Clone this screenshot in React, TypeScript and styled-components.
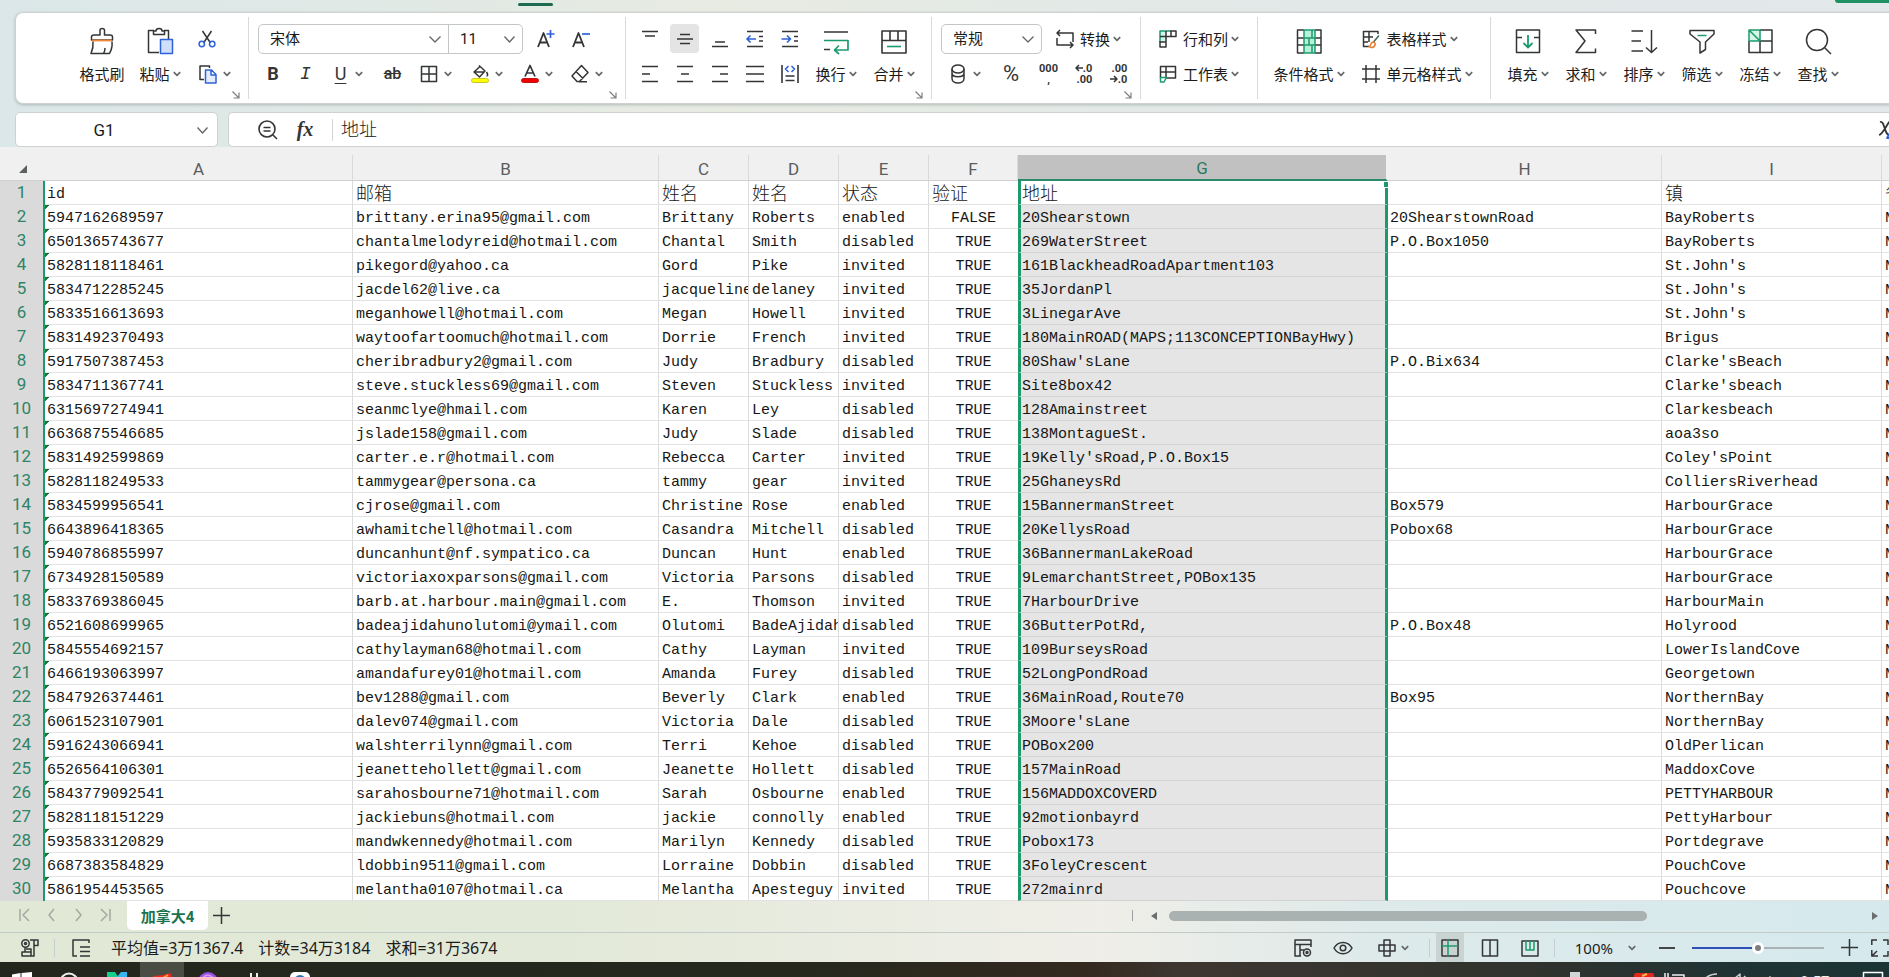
import React from "react";
import styled, { createGlobalStyle, css } from "styled-components";

const INK = "#333536";
const GREEN = "#1c9a6c";
const BLUE = "#2f62d9";

const GlobalStyle = createGlobalStyle`
  * { box-sizing: border-box; }
  body {
    margin: 0;
    overflow: hidden;
    font-family: Roboto, "Noto Sans CJK SC", sans-serif;
    font-size: 15px;
    color: #1b1b1b;
  }
  button, select, input {
    font: inherit;
    color: inherit;
    margin: 0;
    padding: 0;
    border: 0;
    background: none;
    outline: 0;
  }
`;

/* ---------- icons ---------- */

type IconProps = { w?: number; h?: number; vb?: string; sw?: number; children: React.ReactNode };

const Svg = styled.svg`
  display: block;
  flex: none;
  overflow: visible;
`;

const Icon = ({ w = 18, h, vb, sw = 1.5, children }: IconProps) => (
  <Svg
    width={w}
    height={h ?? w}
    viewBox={vb ?? `0 0 ${w} ${h ?? w}`}
    fill="none"
    stroke={INK}
    strokeWidth={sw}
    strokeLinejoin="round"
    aria-hidden="true"
  >
    {children}
  </Svg>
);

const Chevron = ({ w = 8 }: { w?: number }) => (
  <Icon w={w} h={8} vb={`0 0 ${w} 8`} sw={w > 8 ? 1.4 : 1.7}>
    <path stroke="#66696a" d={w > 8 ? `M0.5 1.5 L${w / 2} 7 L${w - 0.5} 1.5` : "M0.8 2.2 L4 5.4 L7.2 2.2"} />
  </Icon>
);

const Brush = () => (
  <Icon w={28}>
    <path d="M12 8V3.2C12 .8 16.500.8 16.500 3.200V8H22C23.500 8 24.500 9 24.500 10V13H3.500V10C3.500 9 4.500 8 6 8Z" />
    <path stroke="#f0883c" strokeWidth="1.800" d="M4 13.500H24" />
    <path d="M5 14.500C5.500 19 4.500 23 3 26.500H21.500C23.500 23 24.500 19 24 14.500M15.500 26.500C16.500 25 17 23 17 21" />
  </Icon>
);
const Paste = () => (
  <Icon w={28}>
    <path d="M8 3.500H2.500V25.500H13M18 3.500H22.500V12" />
    <path d="M7.500 7.500V4H10C10 .8 16 .8 16 4H18.500V7.500Z" />
    <rect x="14.500" y="12.500" width="12" height="14" fill="#cfe0fb" stroke={BLUE} />
  </Icon>
);
const Scissors = () => (
  <Icon>
    <path d="M4.500 1L12.500 13M13.500 1L5.500 13" />
    <circle cx="3.800" cy="14" r="2.700" stroke={BLUE} />
    <circle cx="14.200" cy="14" r="2.700" stroke={BLUE} />
  </Icon>
);
const Copy = () => (
  <Icon>
    <path d="M5 14.500H1V1H10.500V3" />
    <path stroke={BLUE} fill="#e3edfd" d="M6.500 5H12.500L17 9.500V18H6.500ZM12 5V10H17" />
  </Icon>
);
const FontGrow = () => (
  <Icon>
    <path d="M1 17L6.500 3L12 17M3 12.500H10" strokeWidth="1.800" />
    <path stroke={BLUE} strokeWidth="1.700" d="M13.500 0V8M9.500 4H17.500" />
  </Icon>
);
const FontShrink = () => (
  <Icon>
    <path d="M1 17L6.500 3L12 17M3 12.500H10" strokeWidth="1.800" />
    <path stroke={BLUE} strokeWidth="1.700" d="M10 4H18" />
  </Icon>
);
const Borders = () => (
  <Icon>
    <path d="M1.500 1.500H16.500V16.500H1.500ZM9 1.500V16.500M1.500 9H16.500" />
  </Icon>
);
const Fill = () => (
  <Icon>
    <path d="M8 0.500L14 6L8.500 12L3 7L9 1.500M3.500 7H13M15.500 7C17 9.500 17 11 15.500 11" />
    <rect x="0.500" y="13.500" width="17" height="4" rx="2" fill="#ffff00" stroke="#c8c820" strokeWidth="1" />
  </Icon>
);
const FontColor = () => (
  <Icon>
    <path d="M4 11.500L9 0.500L14 11.500M6 8H12" strokeWidth="1.700" />
    <rect x="0.500" y="13.500" width="17" height="4" rx="2" fill="#f00000" stroke="#c01010" strokeWidth="1" />
  </Icon>
);
const Eraser = () => (
  <Icon>
    <path d="M10.500 0.500L17 7.500L8.500 16.500H6L1 11ZM5 6.500L12 13.500M8 16.800H16" />
  </Icon>
);
const Lines = ({ d }: { d: string }) => (
  <Icon sw={1.7}>
    <path d={d} />
  </Icon>
);
const Indent = ({ right = false }: { right?: boolean }) => (
  <Icon sw={1.7}>
    <path d="M1 1.500H17M13 6.500H17M13 11H17M1 16.500H17" />
    <path stroke={BLUE} d={right ? "M0.500 9H9M6 5.500L9.500 9L6 12.500" : "M10 9H1.500M4.500 5.500L1 9L4.500 12.500"} />
  </Icon>
);
const Distribute = () => (
  <Icon sw={1.6}>
    <path d="M1 0V18M17 0V18M4.500 11H13.500M4.500 15.500H13.500" />
    <path stroke={BLUE} d="M7.500 1L4.500 4L7.500 7M10.500 1L13.500 4L10.500 7" />
  </Icon>
);
const Wrap = () => (
  <Icon w={28} sw={1.7}>
    <path d="M2 5H26M2 22.500H8" />
    <path stroke={GREEN} d="M2 13.500H26V23H13M17 18.500L12.500 23L17 27" />
  </Icon>
);
const Merge = () => (
  <Icon w={28} sw={1.6}>
    <path d="M2 4H26V26H2ZM2 13.500H26M10 4V13.500M18 4V13.500" />
    <path stroke={GREEN} d="M7 19.500H21" />
  </Icon>
);
const Convert = () => (
  <Icon>
    <path d="M4 0L1 3L4 6M1 3H17V12M14 18L17 15L14 12M17 15H1V8" />
  </Icon>
);
const Coins = () => (
  <Icon w={14} h={20}>
    <ellipse cx="7" cy="5" rx="6" ry="4" />
    <path d="M1 5V9C1 14 13 14 13 9V5M1 9.500V14.500C1 20.500 13 20.500 13 14.500V9.500" />
  </Icon>
);
const RowCol = () => (
  <Icon>
    <path fill="#d3f6e6" stroke="none" d="M1 1H7V12H1Z" />
    <path stroke={GREEN} d="M1 12V1H11" />
    <path d="M11 1H17V6.500H7V17H1V11M1 6.500H7M1 12H7M7 1V6.500M12 1V6.500" />
  </Icon>
);
const SheetIcon = () => (
  <Icon>
    <path d="M1.500 13V1.500H16.500V13H7M1.500 7H16.500M7 1.500V13" />
    <path stroke={GREEN} d="M1.500 12.500H7.500L5 17H1.500Z" />
  </Icon>
);
const CondFormat = () => (
  <Icon w={28}>
    <path fill="#b9f0d9" stroke="none" d="M9 3H20V26H9Z" />
    <path d="M9 3H2.500V26H9M20 3H26V26H20M2.500 11H9M2.500 18H9M20 11H26M20 18H26" />
    <path stroke={GREEN} d="M9 3H20V26H9ZM9 11H20M9 18H20M14 11V18M17 3V11M17 18V26" />
  </Icon>
);
const TableStyle = () => (
  <Icon>
    <path d="M7 16.500H1.500V1.500H16V4M1.500 7H11M7 1.500V12M1.500 12H6" />
    <path stroke="#3c6b58" d="M17 5.500L11.500 12" />
    <path stroke="#ea7a2c" d="M11.500 12C7.500 12 10 16 7 16.500C10 19 14 16.500 13 13Z" />
  </Icon>
);
const CellStyle = () => (
  <Icon>
    <path d="M4 0V18M14 0V18M0 4H18M0 14H18" />
  </Icon>
);
const FillDown = () => (
  <Icon w={28}>
    <path d="M8 10.500H2.500V3H25.500V10.500H20M2.500 10.500V25.500H25.500V10.500" />
    <path stroke={GREEN} strokeWidth="1.800" d="M14 8V20.500M9.500 16L14 20.500L18.500 16" />
  </Icon>
);
const Sigma = () => (
  <Icon w={28}>
    <path d="M23.500 7V3H4L13 14L4 25.500H23.500V21.500" />
  </Icon>
);
const Sort = () => (
  <Icon w={28}>
    <path d="M1.500 4H13M1.500 14H11M1.500 24H13M21.500 3V25.500M16 20.500L21.500 25.500L27 20.500" />
  </Icon>
);
const Filter = () => (
  <Icon w={28}>
    <path d="M2 3.500H26V7L17.500 15V22.500L12 26V15L2 7Z" />
    <path stroke={GREEN} d="M9.500 8.500H18.500" />
  </Icon>
);
const Freeze = () => (
  <Icon w={28}>
    <path fill="#d3f6e6" stroke="none" d="M3 3H14V14H3Z" />
    <path d="M14 3H26V25.500H3V14M14 14V25.500M14 14H26" />
    <path stroke={GREEN} d="M3 14V3H14V14ZM3 3L14 14" />
  </Icon>
);
const Find = () => (
  <Icon w={28}>
    <circle cx="13" cy="13" r="10.500" />
    <path d="M20.500 20.500L27 27" />
  </Icon>
);
const ZoomOut = () => (
  <Icon w={20} sw={1.6}>
    <circle cx="9" cy="9" r="8" />
    <path d="M15 15L19 19M5.500 7.500H12.500M5.500 11H12.500" />
  </Icon>
);
const EquationIcon = () => (
  <Icon w={20} sw={1.8}>
    <path d="M2 2C7 0 6 16 12 15M12 1C9 4 5 14 1 15" />
    <path stroke={BLUE} d="M9 18L13 11L17 18Z" />
  </Icon>
);
const SmallArrow = ({ right = false }: { right?: boolean }) => (
  <Icon w={8} sw={1.5}>
    <path d={right ? "M0 4H7M4 1L7 4L4 7" : "M8 4H1M4 1L1 4L4 7"} />
  </Icon>
);
const Launcher = () => (
  <Icon w={8} sw={1.2}>
    <path stroke="#7c7f80" d="M0.500 0.500L7 7M7 1.500V7H1.500" />
  </Icon>
);

/* ---------- shell ---------- */

const Window = styled.div`
  height: 100vh;
  width: calc(100% + 12px);
  display: flex;
  flex-direction: column;
  overflow: hidden;
  background: linear-gradient(90deg, #dbe7e8 0%, #e1e9e5 22%, #e8ebe2 38%, #e2e9e7 60%, #e3e8ea 100%);
`;

const TabStrip = styled.div`
  flex: none;
  height: 12px;
  display: flex;
  justify-content: space-between;
  padding-left: 518px;
`;
const TabMarker = styled.span`
  width: 35px;
  height: 3px;
  margin-top: 3px;
  border-radius: 2px;
  background: #1f6b52;
`;
const ShareEdge = styled.span`
  width: 66px;
  height: 3px;
  border-bottom-left-radius: 4px;
  background: #1e9163;
`;

const Ribbon = styled.header`
  flex: none;
  display: flex;
  margin-left: 15px;
  height: 92px;
  border: 1px solid #cdd2d0;
  border-right: 0;
  border-radius: 8px 0 0 8px;
  background: #fff;
  box-shadow: 0 1px 3px rgba(80, 100, 100, 0.35);
`;
const Divider = styled.i`
  flex: none;
  width: 1px;
  margin: 4px 0;
  background: #d9d9d9;
`;
const Group = styled.section<{ $w?: number; $pad?: number }>`
  flex: none;
  width: ${(p) => (p.$w ? `${p.$w}px` : "auto")};
  padding: 8px 8px 0 ${(p) => p.$pad ?? 8}px;
  display: flex;
  flex-direction: column;
`;
const GroupBody = styled.div`
  display: flex;
  height: 70px;
`;
const GroupFoot = styled.div`
  display: flex;
  justify-content: flex-end;
`;
const Stack = styled.div<{ $gap?: number }>`
  display: flex;
  flex-direction: column;
  margin-left: ${(p) => p.$gap ?? 0}px;
`;
const Line = styled.div`
  display: flex;
  align-items: center;
  height: 35px;
`;
const Tool = styled.button<{ $w?: number; $active?: boolean; $gap?: number }>`
  flex: none;
  display: flex;
  align-items: center;
  justify-content: center;
  gap: ${(p) => p.$gap ?? 6}px;
  width: ${(p) => p.$w ?? 35}px;
  height: 29px;
  white-space: nowrap;
  ${(p) =>
    p.$active &&
    css`
      width: 29px;
      margin: 0 3px;
      border-radius: 4px;
      background: #e4e4e4;
    `}
`;
const Big = styled.button<{ $w?: number }>`
  flex: none;
  display: grid;
  grid-template-rows: 35px 35px;
  place-items: center;
  width: ${(p) => p.$w ?? 58}px;
  white-space: nowrap;
`;
const BigIcon = styled.span`
  padding-top: 4px;
`;
const Caption = styled.span`
  display: flex;
  align-items: center;
  gap: 3px;
`;
const Letter = styled.span<{ $kind: "b" | "i" | "u" | "s" | "pct" }>`
  font-size: 18px;
  line-height: 20px;
  color: ${INK};
  ${(p) => p.$kind === "b" && "font-weight: 700;"}
  ${(p) => p.$kind === "i" && 'font-style: italic; font-family: "Liberation Mono", monospace;'}
  ${(p) => p.$kind === "u" && "text-decoration: underline; text-underline-offset: 3px;"}
  ${(p) => p.$kind === "s" && "font-size: 16px; font-weight: 500; text-decoration: line-through;"}
  ${(p) => p.$kind === "pct" && "font-size: 22px;"}
`;
const Digits = styled.span<{ $center?: boolean }>`
  display: grid;
  justify-items: ${(p) => (p.$center ? "center" : "end")};
  font-size: 11px;
  font-weight: 700;
  line-height: 11px;
  color: ${INK};
  span {
    display: flex;
    align-items: center;
  }
`;

const Combo = styled.div`
  display: flex;
  height: 30px;
  border: 1px solid #c3c6c6;
  border-radius: 5px;
`;
const Field = styled.label<{ $w: number; $split?: boolean }>`
  position: relative;
  display: flex;
  width: ${(p) => p.$w}px;
  border-right: ${(p) => (p.$split ? "1px solid #c3c6c6" : "0")};
  svg {
    position: absolute;
    right: 7px;
    top: 10px;
    pointer-events: none;
  }
`;
const Select = styled.select`
  appearance: none;
  flex: 1;
  min-width: 0;
  padding-left: 11px;
`;
const After = styled.div`
  display: flex;
  margin-left: 5px;
`;

const BigTool = ({ icon, label, w, arrow = true }: { icon: React.ReactNode; label: string; w?: number; arrow?: boolean }) => (
  <Big $w={w}>
    <BigIcon>{icon}</BigIcon>
    <Caption>
      {label}
      {arrow && <Chevron />}
    </Caption>
  </Big>
);

/* ---------- formula bar ---------- */

const FormulaRow = styled.div`
  flex: none;
  display: flex;
  gap: 10px;
  margin: 8px 0 0 15px;
`;
const NameBox = styled.label`
  position: relative;
  display: flex;
  width: 203px;
  height: 35px;
  border: 1px solid #cdd2d0;
  border-radius: 5px;
  background: #fff;
  svg {
    position: absolute;
    right: 9px;
    top: 13px;
  }
  input {
    width: 176px;
    text-align: center;
    font-size: 17px;
  }
`;
const FormulaBox = styled.div`
  flex: 1;
  display: flex;
  align-items: center;
  height: 35px;
  padding-left: 29px;
  border: 1px solid #cdd2d0;
  border-right: 0;
  border-radius: 5px 0 0 5px;
  background: #fff;
`;
const Fx = styled.button`
  width: 54px;
  font: italic 700 20px "Liberation Serif", serif;
  color: ${INK};
`;
const FormulaSplit = styled.i`
  width: 1px;
  height: 22px;
  margin-right: 8px;
  background: #d5d5d5;
`;
const FormulaInput = styled.input`
  flex: 1;
  padding-bottom: 3px;
  font-family: "Liberation Serif", "Noto Sans CJK SC", serif;
  font-size: 18px;
  font-weight: 300;
`;
const Equation = styled.button`
  width: 23px;
`;

/* ---------- grid ---------- */

const Sheet = styled.main`
  flex: none;
  padding-top: 8px;
  overflow: hidden;
  background: #f0f0f0;
`;
const Grid = styled.table`
  width: 1972px;
  table-layout: fixed;
  border-spacing: 0;
  background: #fff;
`;
const ColHead = styled.th<{ $on?: boolean }>`
  height: 26px;
  padding: 2px 0 0;
  border-right: 1px solid #dadada;
  border-bottom: 1px solid #cfcfcf;
  background: #f0f0f0;
  color: #5a5d5e;
  font-size: 17px;
  font-weight: 400;
  line-height: 22px;
  ${(p) =>
    p.$on &&
    css`
      border-right: 2px solid #f0f0f0;
      border-bottom: 2px solid #2b8a67;
      background: #c1c1c1;
      color: #2b7a5c;
    `}
`;
const Corner = styled(ColHead)`
  border-right: 0;
  svg { margin-left: 19px; }
`;
const RowHead = styled.th`
  height: 24px;
  padding: 0 0 2px;
  border-right: 2px solid ${GREEN};
  background: #dadada;
  color: #2f8466;
  font-size: 17px;
  font-weight: 400;
  line-height: 22px;
`;
const Cell = styled.td<{ $col: number; $head: boolean }>`
  position: relative;
  height: 24px;
  padding: 5px 3px 0;
  overflow: hidden;
  white-space: nowrap;
  border-right: 1px solid #dcdcdc;
  border-bottom: 1px solid #e2e2e2;
  font-family: "Liberation Mono", "Noto Sans CJK SC", monospace;
  font-size: ${(p) => (p.$head && p.$col > 0 ? 18 : 15)}px;
  font-weight: ${(p) => (p.$head ? 300 : 400)};
  line-height: 18px;
  color: #161616;
  ${(p) => p.$col === 0 && "padding-left: 2px;"}
  ${(p) => p.$col === 0 && !p.$head && "background: linear-gradient(135deg, #1b7a2f 3px, transparent 3px);"}
  ${(p) => p.$col === 5 && "border-right: 0;"}
  ${(p) => p.$col === 5 && !p.$head && "text-align: center;"}
  ${(p) =>
    p.$col === 6 &&
    css`
      padding: 5px 1px 0;
      border-left: 3px solid ${GREEN};
      border-right: 3px solid ${GREEN};
      border-bottom-color: #d2d2d2;
      background: ${p.$head ? "#fff" : "#e5e5e5"};
      overflow: ${p.$head ? "visible" : "hidden"};
    `}
  ${(p) => p.$col === 7 && "padding-left: 2px;"}
`;
const Handle = styled.i`
  position: absolute;
  top: 0;
  right: -4px;
  width: 6px;
  height: 7px;
  border: 1px solid #fff;
  background: ${GREEN};
`;

const WIDTHS = [45, 308, 306, 90, 90, 90, 89, 370, 274, 220, 90];
const LETTERS = ["A", "B", "C", "D", "E", "F", "G", "H", "I", "J"];

const ROWS: string[][] = [
  ["id", "邮箱", "姓名", "姓名", "状态", "验证", "地址", "", "镇"],
  ["5947162689597", "brittany.erina95@gmail.com", "Brittany", "Roberts", "enabled", "FALSE", "20Shearstown", "20ShearstownRoad", "BayRoberts"],
  ["6501365743677", "chantalmelodyreid@hotmail.com", "Chantal", "Smith", "disabled", "TRUE", "269WaterStreet", "P.O.Box1050", "BayRoberts"],
  ["5828118118461", "pikegord@yahoo.ca", "Gord", "Pike", "invited", "TRUE", "161BlackheadRoadApartment103", "", "St.John's"],
  ["5834712285245", "jacdel62@live.ca", "jacqueline", "delaney", "invited", "TRUE", "35JordanPl", "", "St.John's"],
  ["5833516613693", "meganhowell@hotmail.com", "Megan", "Howell", "invited", "TRUE", "3LinegarAve", "", "St.John's"],
  ["5831492370493", "waytoofartoomuch@hotmail.com", "Dorrie", "French", "invited", "TRUE", "180MainROAD(MAPS;113CONCEPTIONBayHwy)", "", "Brigus"],
  ["5917507387453", "cheribradbury2@gmail.com", "Judy", "Bradbury", "disabled", "TRUE", "80Shaw'sLane", "P.O.Bix634", "Clarke'sBeach"],
  ["5834711367741", "steve.stuckless69@gmail.com", "Steven", "Stuckless", "invited", "TRUE", "Site8box42", "", "Clarke'sbeach"],
  ["6315697274941", "seanmclye@hmail.com", "Karen", "Ley", "disabled", "TRUE", "128Amainstreet", "", "Clarkesbeach"],
  ["6636875546685", "jslade158@gmail.com", "Judy", "Slade", "disabled", "TRUE", "138MontagueSt.", "", "aoa3so"],
  ["5831492599869", "carter.e.r@hotmail.com", "Rebecca", "Carter", "invited", "TRUE", "19Kelly'sRoad,P.O.Box15", "", "Coley'sPoint"],
  ["5828118249533", "tammygear@persona.ca", "tammy", "gear", "invited", "TRUE", "25GhaneysRd", "", "ColliersRiverhead"],
  ["5834599956541", "cjrose@gmail.com", "Christine", "Rose", "enabled", "TRUE", "15BannermanStreet", "Box579", "HarbourGrace"],
  ["6643896418365", "awhamitchell@hotmail.com", "Casandra", "Mitchell", "disabled", "TRUE", "20KellysRoad", "Pobox68", "HarbourGrace"],
  ["5940786855997", "duncanhunt@nf.sympatico.ca", "Duncan", "Hunt", "enabled", "TRUE", "36BannermanLakeRoad", "", "HarbourGrace"],
  ["6734928150589", "victoriaxoxparsons@gmail.com", "Victoria", "Parsons", "disabled", "TRUE", "9LemarchantStreet,POBox135", "", "HarbourGrace"],
  ["5833769386045", "barb.at.harbour.main@gmail.com", "E.", "Thomson", "invited", "TRUE", "7HarbourDrive", "", "HarbourMain"],
  ["6521608699965", "badeajidahunolutomi@ymail.com", "Olutomi", "BadeAjidah", "disabled", "TRUE", "36ButterPotRd,", "P.O.Box48", "Holyrood"],
  ["5845554692157", "cathylayman68@hotmail.com", "Cathy", "Layman", "invited", "TRUE", "109BurseysRoad", "", "LowerIslandCove"],
  ["6466193063997", "amandafurey01@hotmail.com", "Amanda", "Furey", "disabled", "TRUE", "52LongPondRoad", "", "Georgetown"],
  ["5847926374461", "bev1288@gmail.com", "Beverly", "Clark", "enabled", "TRUE", "36MainRoad,Route70", "Box95", "NorthernBay"],
  ["6061523107901", "dalev074@gmail.com", "Victoria", "Dale", "disabled", "TRUE", "3Moore'sLane", "", "NorthernBay"],
  ["5916243066941", "walshterrilynn@gmail.com", "Terri", "Kehoe", "disabled", "TRUE", "POBox200", "", "OldPerlican"],
  ["6526564106301", "jeanettehollett@gmail.com", "Jeanette", "Hollett", "disabled", "TRUE", "157MainRoad", "", "MaddoxCove"],
  ["5843779092541", "sarahosbourne71@hotmail.com", "Sarah", "Osbourne", "enabled", "TRUE", "156MADDOXCOVERD", "", "PETTYHARBOUR"],
  ["5828118151229", "jackiebuns@hotmail.com", "jackie", "connolly", "enabled", "TRUE", "92motionbayrd", "", "PettyHarbour"],
  ["5935833120829", "mandwkennedy@hotmail.com", "Marilyn", "Kennedy", "disabled", "TRUE", "Pobox173", "", "Portdegrave"],
  ["6687383584829", "ldobbin9511@gmail.com", "Lorraine", "Dobbin", "disabled", "TRUE", "3FoleyCrescent", "", "PouchCove"],
  ["5861954453565", "melantha0107@hotmail.ca", "Melantha", "Apesteguy", "invited", "TRUE", "272mainrd", "", "Pouchcove"],
];

/* ---------- bottom bars ---------- */

const bottomTint = css`
  background: linear-gradient(90deg, #e1e8d6 0%, #e3e9d8 30%, #efeee8 58%, #deeaea 72%, #d5e9ed 100%);
`;
const SheetTabs = styled.nav`
  flex: none;
  display: flex;
  height: 31px;
  padding-left: 11px;
  ${bottomTint}
`;
const NavBtn = styled.button`
  display: grid;
  place-items: center;
  width: 27px;
  height: 28px;
`;
const SheetTab = styled.button`
  width: 81px;
  height: 29px;
  margin-left: 8px;
  border-radius: 0 0 5px 5px;
  background: #fff;
  color: #1a7350;
  font-size: 15px;
  font-weight: 700;
`;
const ScrollArea = styled.div`
  flex: 1;
  display: flex;
  align-items: center;
  justify-content: flex-end;
  height: 29px;
  padding-right: 23px;
`;
const Grip = styled.i`
  width: 1px;
  height: 11px;
  margin-right: 18px;
  background: #9aa0a0;
`;
const Track = styled.div`
  width: 715px;
  padding-left: 12px;
`;
const Thumb = styled.div`
  width: 478px;
  height: 10px;
  border-radius: 5px;
  background: #a9b1b1;
`;
const StatusBar = styled.footer`
  flex: none;
  display: flex;
  align-items: center;
  justify-content: space-between;
  height: 30px;
  border-top: 1px solid #c3cbc6;
  ${bottomTint}
`;
const Cluster = styled.div<{ $left?: number }>`
  display: flex;
  align-items: center;
  padding-left: ${(p) => p.$left ?? 0}px;
`;
const Stats = styled.span`
  display: flex;
  gap: 15px;
  padding-left: 4px;
  font-family: "Noto Sans", "Noto Sans CJK SC", sans-serif;
  font-size: 16px;
  line-height: 28px;
`;
const StatusBtn = styled.button<{ $w?: number; $on?: boolean }>`
  display: flex;
  align-items: center;
  justify-content: center;
  gap: 5px;
  width: ${(p) => p.$w ?? 40}px;
  height: 29px;
  ${(p) => p.$on && "width: 28px; margin: 0 6px; background: #c9d4d2;"}
`;
const StatusSplit = styled.i`
  width: 1px;
  height: 18px;
  margin-left: 4px;
  background: #c6cfcd;
`;
const ZoomBtn = styled.button`
  display: flex;
  align-items: center;
  gap: 15px;
  padding: 0 23px 0 20px;
  font-family: "Noto Sans", sans-serif;
`;
const Zoom = styled.input`
  appearance: none;
  width: 132px;
  height: 12px;
  margin: 0 17px;
  background: linear-gradient(90deg, #2c50b5 66px, #a9b3b5 66px) center / 100% 2px no-repeat;
  &::-webkit-slider-thumb {
    appearance: none;
    width: 12px;
    height: 12px;
    border: 3px solid #fff;
    border-radius: 50%;
    background: #7e7e7e;
  }
`;

const TaskBar = styled.footer`
  flex: none;
  display: flex;
  align-items: center;
  height: 40px;
  background: linear-gradient(90deg, #22261c 0%, #24281d 40%, #33291f 57%, #3d3530 62%, #31332e 80%, #1e3334 92%, #1c3436 100%);
  color: #e9eeee;
`;
const Task = styled.button<{ $w: number; $on?: boolean }>`
  display: grid;
  place-items: center;
  width: ${(p) => p.$w}px;
  height: 40px;
  background: ${(p) => (p.$on ? "#4a4d44" : "none")};
`;
const Tray = styled.div`
  display: flex;
  align-items: center;
  margin-left: auto;
`;

const STAT_TEXT = ["平均值=3万1367.4", "计数=34万3184", "求和=31万3674"];
const NAV_PATHS = ["M1 1V13M10 1L4 7L10 13", "M8 1L3 7L8 13", "M3 1L8 7L3 13", "M10 1V13M1 1L7 7L1 13"];
const NAV_NAMES = ["第一张", "上一张", "下一张", "最后一张"];

export default function App() {
  return (
    <Window>
      <GlobalStyle />
      <TabStrip>
        <TabMarker />
        <ShareEdge />
      </TabStrip>

      <Ribbon>
        <Group $w={232} $pad={57}>
          <GroupBody>
            <BigTool icon={<Brush />} label="格式刷" arrow={false} />
            <BigTool icon={<Paste />} label="粘贴" />
            <Stack>
              <Line><Tool aria-label="剪切"><Scissors /></Tool></Line>
              <Line><Tool $w={52} aria-label="复制"><Copy /><Chevron /></Tool></Line>
            </Stack>
          </GroupBody>
          <GroupFoot><Launcher /></GroupFoot>
        </Group>
        <Divider />

        <Group $w={376} $pad={9}>
          <GroupBody>
            <Stack>
              <Line>
                <Combo>
                  <Field $w={190} $split>
                    <Select aria-label="字体"><option>宋体</option></Select>
                    <Chevron w={12} />
                  </Field>
                  <Field $w={73}>
                    <Select aria-label="字号"><option>11</option></Select>
                    <Chevron w={11} />
                  </Field>
                </Combo>
                <After>
                  <Tool aria-label="增大字号"><FontGrow /></Tool>
                  <Tool aria-label="减小字号"><FontShrink /></Tool>
                </After>
              </Line>
              <Line>
                <Tool $w={30}><Letter $kind="b">B</Letter></Tool>
                <Tool><Letter $kind="i">I</Letter></Tool>
                <Tool $w={52} $gap={9}><Letter $kind="u">U</Letter><Chevron /></Tool>
                <Tool><Letter $kind="s">ab</Letter></Tool>
                <Tool $w={52} aria-label="边框"><Borders /><Chevron /></Tool>
                <Tool $w={50} aria-label="填充颜色"><Fill /><Chevron /></Tool>
                <Tool $w={50} aria-label="字体颜色"><FontColor /><Chevron /></Tool>
                <Tool $w={50} aria-label="清除"><Eraser /><Chevron /></Tool>
              </Line>
            </Stack>
          </GroupBody>
          <GroupFoot><Launcher /></GroupFoot>
        </Group>
        <Divider />

        <Group $w={305} $pad={6}>
          <GroupBody>
            <Stack>
              <Line>
                <Tool aria-label="顶端对齐"><Lines d="M1 1.500H17M4 6H14" /></Tool>
                <Tool $active aria-label="垂直居中"><Lines d="M4 4.500H14M1 9H17M4 13.500H14" /></Tool>
                <Tool aria-label="底端对齐"><Lines d="M4 12H14M1 16.500H17" /></Tool>
                <Tool aria-label="减少缩进"><Indent /></Tool>
                <Tool aria-label="增加缩进"><Indent right /></Tool>
              </Line>
              <Line>
                <Tool aria-label="左对齐"><Lines d="M1 1.500H17M1 9H9M1 16.500H17" /></Tool>
                <Tool aria-label="居中"><Lines d="M1 1.500H17M5 9H13M1 16.500H17" /></Tool>
                <Tool aria-label="右对齐"><Lines d="M1 1.500H17M9 9H17M1 16.500H17" /></Tool>
                <Tool aria-label="两端对齐"><Lines d="M0 1.500H18M0 9H18M0 16.500H18" /></Tool>
                <Tool aria-label="分散对齐"><Distribute /></Tool>
              </Line>
            </Stack>
            <BigTool icon={<Wrap />} label="换行" />
            <BigTool icon={<Merge />} label="合并" />
          </GroupBody>
          <GroupFoot><Launcher /></GroupFoot>
        </Group>
        <Divider />

        <Group $w={208} $pad={9}>
          <GroupBody>
            <Stack>
              <Line>
                <Combo>
                  <Field $w={99}>
                    <Select aria-label="数字格式"><option>常规</option></Select>
                    <Chevron w={12} />
                  </Field>
                </Combo>
                <After><Tool $w={83}><Convert /><Caption>转换<Chevron /></Caption></Tool></After>
              </Line>
              <Line>
                <Tool $w={50} $gap={8} aria-label="货币"><Coins /><Chevron /></Tool>
                <Tool $w={40}><Letter $kind="pct">%</Letter></Tool>
                <Tool><Digits $center><span>000</span><span>,</span></Digits></Tool>
                <Tool><Digits><span><SmallArrow />.0</span><span>.00</span></Digits></Tool>
                <Tool><Digits><span>.00</span><span><SmallArrow right />.0</span></Digits></Tool>
              </Line>
            </Stack>
          </GroupBody>
          <GroupFoot><Launcher /></GroupFoot>
        </Group>
        <Divider />

        <Group $w={116} $pad={16}>
          <GroupBody>
            <Stack>
              <Line><Tool $w={84}><RowCol /><Caption>行和列<Chevron /></Caption></Tool></Line>
              <Line><Tool $w={84}><SheetIcon /><Caption>工作表<Chevron /></Caption></Tool></Line>
            </Stack>
          </GroupBody>
        </Group>
        <Divider />

        <Group $w={232} $pad={6}>
          <GroupBody>
            <BigTool icon={<CondFormat />} label="条件格式" w={90} />
            <Stack $gap={7}>
              <Line><Tool $w={98}><TableStyle /><Caption>表格样式<Chevron /></Caption></Tool></Line>
              <Line><Tool $w={113}><CellStyle /><Caption>单元格样式<Chevron /></Caption></Tool></Line>
            </Stack>
          </GroupBody>
        </Group>
        <Divider />

        <Group $pad={8}>
          <GroupBody>
            <BigTool icon={<FillDown />} label="填充" />
            <BigTool icon={<Sigma />} label="求和" />
            <BigTool icon={<Sort />} label="排序" />
            <BigTool icon={<Filter />} label="筛选" />
            <BigTool icon={<Freeze />} label="冻结" />
            <BigTool icon={<Find />} label="查找" />
          </GroupBody>
        </Group>
      </Ribbon>

      <FormulaRow>
        <NameBox>
          <input aria-label="名称框" defaultValue="G1" />
          <Chevron w={11} />
        </NameBox>
        <FormulaBox>
          <ZoomOut />
          <Fx>fx</Fx>
          <FormulaSplit />
          <FormulaInput aria-label="编辑栏" defaultValue="地址" />
          <Equation aria-label="公式"><EquationIcon /></Equation>
        </FormulaBox>
      </FormulaRow>

      <Sheet>
        <Grid>
          <colgroup>
            {WIDTHS.map((w, i) => (
              <col key={i} width={w} />
            ))}
          </colgroup>
          <thead>
            <tr>
              <Corner aria-label="全选">
                <Icon w={8}>
                  <path fill="#5d6061" stroke="none" d="M8 0V8H0Z" />
                </Icon>
              </Corner>
              {LETTERS.map((l) => (
                <ColHead key={l} scope="col" $on={l === "G"}>{l}</ColHead>
              ))}
            </tr>
          </thead>
          <tbody>
            {ROWS.map((row, r) => (
              <tr key={r}>
                <RowHead scope="row">{r + 1}</RowHead>
                {row.map((text, c) => (
                  <Cell key={c} $col={c} $head={r === 0}>
                    {text}
                    {r === 0 && c === 6 && <Handle />}
                  </Cell>
                ))}
                <Cell $col={9} $head={r === 0}>{r === 0 ? "省" : "NL"}</Cell>
              </tr>
            ))}
          </tbody>
        </Grid>
      </Sheet>

      <SheetTabs>
        {NAV_PATHS.map((d, i) => (
          <NavBtn key={d} aria-label={NAV_NAMES[i]}>
            <Icon w={11} h={14}><path stroke="#a4aaa0" d={d} /></Icon>
          </NavBtn>
        ))}
        <SheetTab>加拿大4</SheetTab>
        <NavBtn aria-label="新建工作表">
          <Icon w={17}><path d="M8.500 0V17M0 8.500H17" /></Icon>
        </NavBtn>
        <ScrollArea>
          <Grip />
          <Icon w={6} h={8}><path fill="#6a6e6e" stroke="none" d="M6 0V8L0 4Z" /></Icon>
          <Track><Thumb /></Track>
          <Svg width="6" height="8" aria-hidden="true"><path fill="#6a6e6e" d="M0 0V8L6 4Z" /></Svg>
        </ScrollArea>
      </SheetTabs>

      <StatusBar>
        <Cluster $left={10}>
          <StatusBtn aria-label="宏">
            <Icon>
              <path d="M9 1H17V6.500H13V17H10V12.500M13 6.500V1M10 12.500V10H5M10 13H1V17H11M4 9V13" />
              <circle cx="4.500" cy="4.500" r="3.700" />
              <circle cx="4.500" cy="4.500" r="1" />
            </Icon>
          </StatusBtn>
          <StatusSplit />
          <StatusBtn $w={52} aria-label="统计">
            <Icon><path d="M17 4V1H1V17H5M8 8H18M8 12.500H18M8 17H18" /></Icon>
          </StatusBtn>
          <Stats>
            {STAT_TEXT.map((s) => <span key={s}>{s}</span>)}
          </Stats>
        </Cluster>
        <Cluster>
          <StatusBtn aria-label="表格设置">
            <Icon><path d="M7 17H1V1H17V8M1 5.500H17M6 5.500V17M6 11H10" /><circle cx="13" cy="13.500" r="3.500" /><circle cx="13" cy="13.500" r="1" /></Icon>
          </StatusBtn>
          <StatusBtn aria-label="护眼模式">
            <Icon><path d="M0 9C4 1.500 14 1.500 18 9C14 16.500 4 16.500 0 9Z" /><circle cx="9" cy="9" r="2.800" /></Icon>
          </StatusBtn>
          <StatusBtn $w={62} aria-label="阅读模式">
            <Icon><path d="M6 1H12V17H6ZM1 6H17V12H1Z" /></Icon>
            <Chevron />
          </StatusBtn>
          <StatusSplit />
          <StatusBtn $on aria-label="普通视图">
            <Icon><path d="M1 1H17V17H1Z" /><path stroke={GREEN} d="M7 1V17M1 7H17" /></Icon>
          </StatusBtn>
          <StatusBtn aria-label="页面布局">
            <Icon><path d="M1.500 1H16.500V17H1.500ZM9 1V17" /></Icon>
          </StatusBtn>
          <StatusBtn aria-label="分页预览">
            <Icon><path d="M1 2H17V17H1Z" /><path stroke={GREEN} d="M5 2V11H13V2M9 2V11" /></Icon>
          </StatusBtn>
          <StatusSplit />
          <ZoomBtn>100%<Chevron /></ZoomBtn>
          <Icon w={16} sw={1.8}><path d="M0 8H16" /></Icon>
          <Zoom type="range" aria-label="缩放" min={0} max={100} defaultValue={50} />
          <Icon w={17}><path d="M8.500 0V17M0 8.500H17" /></Icon>
          <StatusBtn $w={43} aria-label="全屏">
            <Icon><path d="M0.800 6V1H6M12 1H17V6M17 12V17H12M0.800 11V17H7M1 17L6 12" /></Icon>
          </StatusBtn>
        </Cluster>
      </StatusBar>

      <TaskBar>
        <Task $w={44} aria-label="开始">
          <Icon w={20}><path fill="#fff" stroke="none" d="M0 2.500L8.500 1V9.500H0ZM9.500 1L20 0V9.500H9.500ZM0 10.500H8.500V19L0 17.500ZM9.500 10.500H20V20L9.500 19Z" /></Icon>
        </Task>
        <Task $w={50} aria-label="搜索">
          <Icon w={20} sw={2}><circle cx="10" cy="10" r="8.500" stroke="#eee" /></Icon>
        </Task>
        <Task $w={46} aria-label="文件">
          <Icon w={20}><path fill="#12d18e" stroke="none" d="M0 0H8L12 6V20H0Z" /><path fill="#35b8f2" stroke="none" d="M20 0H14L10 5V20H20Z" /></Icon>
        </Task>
        <Task $w={44} $on aria-label="表格">
          <Icon w={22} h={20}><path fill="#e32d22" stroke="none" d="M2 4L12 3L20 1L22 20H0Z" /><path stroke="#ff9c33" strokeWidth="2" d="M12 6L17 3" /></Icon>
        </Task>
        <Task $w={48} aria-label="浏览器">
          <Icon w={20}><circle cx="10" cy="10" r="10" fill="#9b4de0" stroke="none" /><path stroke="#c897f5" strokeWidth="2" d="M4 8C6 2 12 2 15 6" /></Icon>
        </Task>
        <Task $w={44} aria-label="设备">
          <Icon w={12} h={18}><path fill="#eee" stroke="none" d="M2 0H4V4H8V0H10V5H12V18H0V5H2Z" /></Icon>
        </Task>
        <Task $w={48} aria-label="应用">
          <Icon w={20}><rect width="20" height="20" rx="5" fill="#fff" stroke="none" /><circle cx="10" cy="9" r="6" fill="#2474b8" stroke="none" /></Icon>
        </Task>
        <Tray>
          <Task $w={44} aria-label="硬盘">
            <Icon w={10} h={20}><path fill="#cfd6d6" stroke="none" d="M0 0H10V6H8V20H2V6H0Z" /></Icon>
          </Task>
          <Task $w={34} aria-label="更多">
            <Icon w={10} h={8}><path stroke="#ddd" d="M0 6L5 1L10 6" /></Icon>
          </Task>
          <Task $w={26} aria-label="通知">
            <Icon w={20} h={18}><rect width="20" height="18" rx="2" fill="#e0271b" stroke="none" /><path stroke="#ffb347" strokeWidth="2" d="M8 3L13 1" /></Icon>
          </Task>
          <Task $w={34} aria-label="电源">
            <Icon w={20} h={18}><path stroke="#eee" d="M1 0V4M4 0V4M8 2H20V14H2V6" /></Icon>
          </Task>
          <Task $w={38} aria-label="网络">
            <Icon w={16} h={18}><path stroke="#ccc" d="M1 8C4 4 9 1 15 1M5 12C8 8 11 6 15 6" /></Icon>
          </Task>
          <Task $w={26} aria-label="音量">
            <Icon w={16} h={18}><path stroke="#ccc" d="M0 6L6 1V15L0 10M10 3C14 6 14 10 10 13" /></Icon>
          </Task>
          <Task $w={30}>中</Task>
          <Task $w={60}>9:57</Task>
          <Task $w={56} aria-label="操作中心">
            <Icon w={20} h={20}><path stroke="#fff" d="M0.500 0.500H19.500V16H0.500Z" /></Icon>
          </Task>
        </Tray>
      </TaskBar>
    </Window>
  );
}
